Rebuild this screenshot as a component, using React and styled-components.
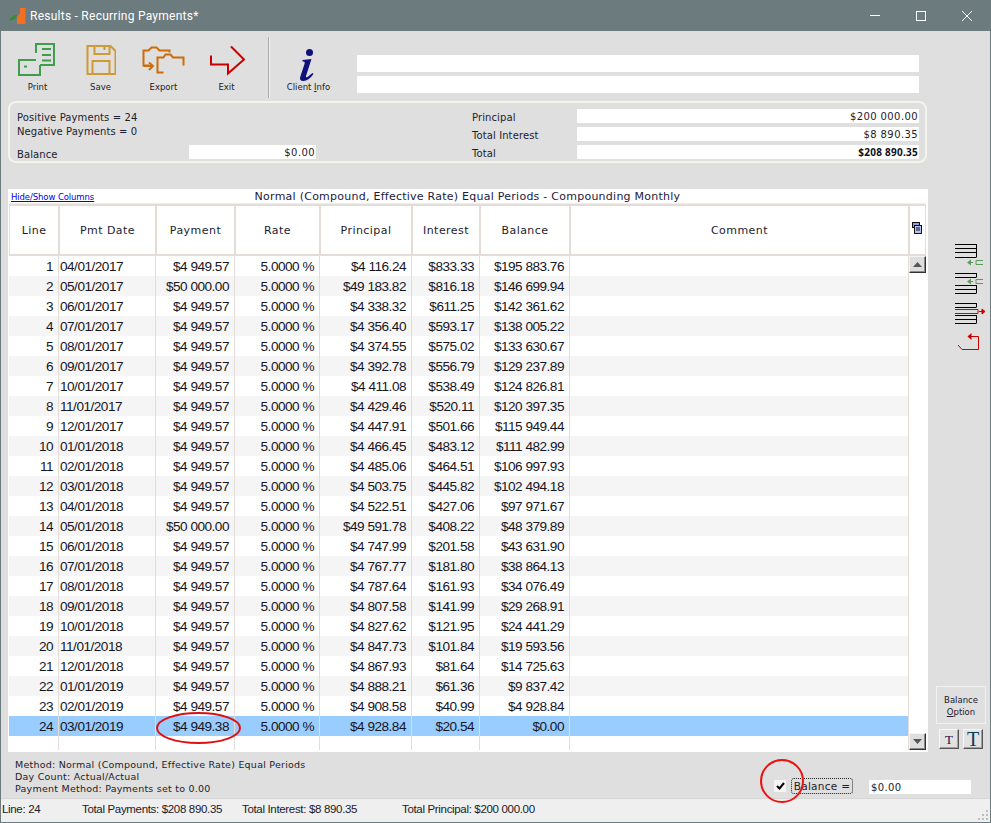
import React from "react";
import styled, { createGlobalStyle } from "styled-components";

const Global = createGlobalStyle`
  html, body { margin: 0; padding: 0; background: #dfdfdf; }
  * { box-sizing: border-box; }
`;

const UI = `"DejaVu Sans", Verdana, sans-serif`;
const CELL = `"Liberation Sans", Arial, sans-serif`;
const COLS = "50px 97px 79px 85px 92px 68px 90px 339px";

const rows = [
  ["04/01/2017", "$4 949.57", "$4 116.24", "$833.33", "$195 883.76"],
  ["05/01/2017", "$50 000.00", "$49 183.82", "$816.18", "$146 699.94"],
  ["06/01/2017", "$4 949.57", "$4 338.32", "$611.25", "$142 361.62"],
  ["07/01/2017", "$4 949.57", "$4 356.40", "$593.17", "$138 005.22"],
  ["08/01/2017", "$4 949.57", "$4 374.55", "$575.02", "$133 630.67"],
  ["09/01/2017", "$4 949.57", "$4 392.78", "$556.79", "$129 237.89"],
  ["10/01/2017", "$4 949.57", "$4 411.08", "$538.49", "$124 826.81"],
  ["11/01/2017", "$4 949.57", "$4 429.46", "$520.11", "$120 397.35"],
  ["12/01/2017", "$4 949.57", "$4 447.91", "$501.66", "$115 949.44"],
  ["01/01/2018", "$4 949.57", "$4 466.45", "$483.12", "$111 482.99"],
  ["02/01/2018", "$4 949.57", "$4 485.06", "$464.51", "$106 997.93"],
  ["03/01/2018", "$4 949.57", "$4 503.75", "$445.82", "$102 494.18"],
  ["04/01/2018", "$4 949.57", "$4 522.51", "$427.06", "$97 971.67"],
  ["05/01/2018", "$50 000.00", "$49 591.78", "$408.22", "$48 379.89"],
  ["06/01/2018", "$4 949.57", "$4 747.99", "$201.58", "$43 631.90"],
  ["07/01/2018", "$4 949.57", "$4 767.77", "$181.80", "$38 864.13"],
  ["08/01/2018", "$4 949.57", "$4 787.64", "$161.93", "$34 076.49"],
  ["09/01/2018", "$4 949.57", "$4 807.58", "$141.99", "$29 268.91"],
  ["10/01/2018", "$4 949.57", "$4 827.62", "$121.95", "$24 441.29"],
  ["11/01/2018", "$4 949.57", "$4 847.73", "$101.84", "$19 593.56"],
  ["12/01/2018", "$4 949.57", "$4 867.93", "$81.64", "$14 725.63"],
  ["01/01/2019", "$4 949.57", "$4 888.21", "$61.36", "$9 837.42"],
  ["02/01/2019", "$4 949.57", "$4 908.58", "$40.99", "$4 928.84"],
  ["03/01/2019", "$4 949.38", "$4 928.84", "$20.54", "$0.00"],
];

const Window = styled.div`
  width: 991px; height: 823px; display: flex; flex-direction: column;
  border: 1px solid #6b7b7e; border-top: 0; background: #dfdfdf; overflow: hidden; position: relative;
  font-family: ${UI}; color: #1c1c2c;
`;
const TitleBar = styled.header`
  height: 31px; flex: none; background: #6b7b7e; display: flex; align-items: center;
  padding-left: 8px; color: #fff; font: 12px Roboto, sans-serif; letter-spacing: 0.25px;
`;
const TitleText = styled.span` margin-left: 4px; flex: 1; `;
const WinButton = styled.button`
  width: 46px; height: 31px; border: 0; padding: 0; background: transparent;
  display: flex; align-items: center; justify-content: center;
`;
const Toolbar = styled.div`
  height: 70px; flex: none; display: flex; align-items: flex-start; padding-left: 4px;
`;
const ToolButton = styled.div`
  width: 63px; height: 63px; margin-top: 11px; display: flex; flex-direction: column; align-items: center;
  font-size: 8.5px; line-height: 12px; color: #222; text-indent: 2px;
`;
const ToolIcon = styled.div`
  height: 35px; display: flex; align-items: center; justify-content: center; margin-bottom: 4px;
`;
const ToolDivider = styled.div`
  width: 2px; height: 61px; margin: 6px 6px 0 11px; background: #a8a8a8; border-right: 1px solid #f2f2f2;
`;
const ClientFields = styled.div`
  margin: 24px 0 0 18px; width: 562px; display: flex; flex-direction: column; gap: 4px;
`;
const ClientField = styled.div` height: 17px; background: #fff; `;
const Field = styled.div`
  height: 14px; background: #fff; font-size: 10px; letter-spacing: 0.4px;
  line-height: 16px; padding: 0 1px 0 2px; text-align: right; color: #1c1c2c;
`;
const TotalField = styled(Field)`
  font: bold 10px/15px "Noto Sans", sans-serif; letter-spacing: 0.25px; color: #101018;
`;
const BalanceField = styled(Field)` width: 127px; `;
const Summary = styled.section`
  height: 62px; flex: none; margin: 0 63px 0 7px; border: 2px solid #f4f4ec; border-radius: 8px;
  padding: 6px 6px 0 7px; display: flex; justify-content: space-between;
`;
const SummaryLeft = styled.div` width: 299px; font-size: 10px; letter-spacing: 0.1px; `;
const SummaryLine = styled.div` height: 14px; line-height: 17px; `;
const BalanceLine = styled.div`
  display: flex; justify-content: space-between; align-items: flex-start; margin-top: 8px; height: 14px; line-height: 19px;
`;
const SummaryRight = styled.div`
  width: 447px; display: grid; grid-template-columns: 105px 342px; row-gap: 4px; grid-auto-rows: 14px;
  font-size: 10px; letter-spacing: 0.1px; line-height: 17px;
`;
const Main = styled.div`
  flex: none; height: 563px; margin-top: 26px; display: flex; padding-left: 7px;
`;
const Panel = styled.section`
  width: 920px; height: 563px; background: #fff; position: relative; display: flex; flex-direction: column;
`;
const Caption = styled.div`
  height: 15px; flex: none; display: flex; position: relative; justify-content: center; margin-right: 3px; padding-left: 2px;
  font-size: 11px; line-height: 16px; letter-spacing: 0.25px; border-bottom: 1px solid #f4ece6; color: #221a3c;
`;
const ColumnsLink = styled.a`
  position: absolute; left: 3px; top: 3px; font-size: 8.5px; line-height: 11px; letter-spacing: -0.1px;
  color: #0000ee; text-decoration: underline;
`;
const TableArea = styled.div` display: flex; flex: 1; padding-left: 1px; `;
const Table = styled.div` width: 900px; display: flex; flex-direction: column; `;
const HeadRow = styled.div`
  display: grid; grid-template-columns: ${COLS}; height: 52px; flex: none;
  border-top: 2px solid #e3dcd9; border-bottom: 2px solid #e3dcd9; border-left: 1px solid #e3dcd9;
`;
const HeadCell = styled.div`
  display: flex; align-items: center; justify-content: center; font-size: 11px; letter-spacing: 0.45px;
  border-right: 2px solid #e3dcd9; color: #1c1c30;
`;
const Row = styled.div`
  display: grid; grid-template-columns: ${COLS}; height: 20px; flex: none;
  background: ${(p) => (p.$selected ? "#99ccff" : p.$alt ? "#f5f5f5" : "#fff")};
`;
const Cell = styled.div`
  border-right: 1px solid #e3dcd9; font: 13.6px/21px ${CELL}; letter-spacing: -0.5px; color: #15151f;
  padding: 0 ${(p) => (p.$left ? 0 : 5)}px 0 ${(p) => (p.$left ? 1 : 0)}px; text-align: ${(p) => (p.$left ? "left" : "right")};
  white-space: nowrap; overflow: hidden;
`;
const Filler = styled(Row)` height: 14px; `;
const ScrollColumn = styled.div`
  width: 19px; display: flex; flex-direction: column; align-items: flex-start;
`;
const ScrollHead = styled.div`
  height: 52px; width: 17px; border-top: 2px solid #e3dcd9; border-bottom: 2px solid #e3dcd9;
  border-right: 1px solid #e3dcd9; display: flex; justify-content: center; padding: 16px 0 0 0;
`;
const ScrollTrack = styled.div`
  flex: 1; width: 17px; display: flex; flex-direction: column; justify-content: space-between; margin-bottom: 2px;
`;
const ScrollButton = styled.button`
  width: 17px; height: 17px; padding: 0; background: #dedede; display: flex; align-items: center; justify-content: center;
  border: 1px solid; border-color: #f4f4f4 #333 #333 #f4f4f4; box-shadow: inset -1px -1px 0 #8a8a8a;
`;
const Side = styled.aside`
  width: 61px; display: flex; flex-direction: column; align-items: flex-start; padding: 55px 0 3px;
`;
const SideIcons = styled.div` margin-left: 27px; display: flex; flex-direction: column; gap: 7px; flex: 1; `;
const BalanceOption = styled.div`
  width: 50px; height: 38px; margin-left: 8px; border: 1px solid #f2f2f2; display: flex; align-items: center; justify-content: center;
  text-align: center; font-size: 8.5px; line-height: 12px; color: #20202e; padding-top: 1px;
`;
const TButtons = styled.div` display: flex; gap: 4px; margin: 5px 0 0 11px; `;
const TButton = styled.button`
  width: 20px; height: 20px; padding: 0; background: #e2e2e2; border: 1px solid; border-color: #f6f6f6 #555 #555 #f6f6f6;
  box-shadow: inset -1px -1px 0 #a0a0a0;
  font: ${(p) => (p.$big ? "20px/18px" : "13px/17px")} "Liberation Serif", serif;
  color: ${(p) => (p.$big ? "#0b3d55" : "#2a0a4c")};
`;
const Footer = styled.div`
  height: 46px; flex: none; display: flex; justify-content: space-between; padding: 7px 19px 0 14px; position: relative; z-index: 1;
`;
const MethodInfo = styled.div` font-size: 9.5px; line-height: 12px; letter-spacing: 0.23px; `;
const BalanceCheck = styled.div`
  display: flex; align-items: flex-start; margin-top: 19px; height: 16px; position: relative; font-size: 10.5px; letter-spacing: 0.3px;
`;
const CheckBox = styled.span`
  width: 12px; height: 12px; margin-top: 2px; background: #f4f4f4; display: flex; align-items: center; justify-content: center;
`;
const FocusLabel = styled.span`
  margin-left: 5px; width: 62px; height: 16px; border: 1px dotted #222; border-radius: 3px; line-height: 14px; text-align: center; white-space: nowrap;
`;
const FooterValue = styled(Field)` width: 102px; margin: 2px 0 0 16px; text-align: left; `;
const StatusBar = styled.footer`
  flex: 1; background: #efefef; border-top: 1px solid #d6d6d6; display: flex; align-items: center; position: relative;
  font: 11.5px ${CELL}; letter-spacing: -0.33px; color: #1a1a28; padding: 0 0 3px 1px;
`;
const StatusItem = styled.span` width: ${(p) => p.$w}px; flex: none; `;
const Grip = styled.svg` position: absolute; right: 1px; bottom: 1px; `;
const RingMark = styled.svg` position: absolute; overflow: visible; pointer-events: none; `;
const PaymentRing = styled(RingMark)` left: 148px; top: 523px; `;
const CheckRing = styled(RingMark)` left: -14px; top: -19px; `;
const SideGlyph = styled.svg` display: block; `;

const PrintIcon = () => (
  <svg width="39" height="35" viewBox="17 42 39 35" fill="none" stroke="#3f9e4e" strokeWidth="2">
    <path d="M36 53V44H54V65H40M42 49H51M42 55H51M42 60.500H51" />
    <path d="M36 60H19V75H40V65" />
    <path d="M24 66.500h3" />
  </svg>
);
const SaveIcon = () => (
  <svg width="32" height="33" viewBox="83.500 44 32 33" fill="none" stroke="#cf9a35" strokeWidth="2">
    <path d="M87 47H110L115 52V75H87ZM94 47V55H109V47M104 47V51M92 75V62H109V75" />
  </svg>
);
const ExportIcon = () => (
  <svg width="44" height="30" viewBox="140.500 44.500 44 30" fill="none" stroke="#cc6d0a" strokeWidth="2">
    <path d="M149 65H143V50H148L151 47H156L159 50H169V52" />
    <path d="M163 72H157V57H163L165 54H170L172.500 57H183V65" />
    <path d="M143 65.500H152M148.500 62L152.500 65.500L148.500 69.500" />
  </svg>
);
const ExitIcon = () => (
  <svg width="37" height="30" viewBox="207 45.500 37 30" fill="none" stroke="#c80000" strokeWidth="2" overflow="visible">
    <path d="M211 56V65H228V74L244 60L231 47" />
  </svg>
);
const InfoIcon = () => (
  <svg width="18" height="35" viewBox="298.500 42 18 35" overflow="visible">
    <circle cx="309" cy="52.500" r="3.500" fill="#10107c" />
    <path d="M302 60L311 59L305.500 76Q305 78 307 77L312 73L313 74Q308 81 303 81Q298 81 300 76L304 64Q305 61 302 61.500Z" fill="#10107c" />
  </svg>
);
const LogoIcon = () => (
  <svg width="17" height="18" viewBox="0 0 17 18">
    <path d="M8 17V10L11 6V1H16.500V17Z" fill="#f36f21" />
    <path d="M0 13C2 10 5 8 8 8C7 12 4 14 0 13Z" fill="#2f8f2f" />
  </svg>
);
const Lines = ({ ys, x2 = 21 }) => (
  <g stroke="#000" fill="none">
    {ys.map((y) => <path key={y} d={`M0 ${y}.5H${x2}`} />)}
  </g>
);
const SideA = () => (
  <SideGlyph width="30" height="22">
    <Lines ys={[0, 4, 8, 13]} />
    <path d="M21.500 0V13.500" stroke="#000" />
    <path d="M15 18.500H18M28 16.500H21V20.500H28" stroke="#5d9b5d" fill="none" />
    <path d="M16 15.500V21.500L12 18.500Z" fill="#5d9b5d" />
  </SideGlyph>
);
const SideB = () => (
  <SideGlyph width="30" height="23">
    <Lines ys={[0, 4, 12, 16, 20]} />
    <path d="M21.500 0V4.500M21.500 12V20.500" stroke="#000" />
    <path d="M15 8.500H18M28 6.500H21V10.500H28" stroke="#5d9b5d" fill="none" />
    <path d="M16 5.500V11.500L12 8.500Z" fill="#5d9b5d" />
  </SideGlyph>
);
const SideC = () => (
  <SideGlyph width="31" height="23">
    <Lines ys={[0, 4, 12, 16, 20]} />
    <path d="M21.500 0V4.500M21.500 12V20.500" stroke="#000" />
    <path d="M0 6.500H23V10.500H0" stroke="#d00000" fill="none" />
    <path d="M24 8.500H30M27 6V11L30 8.500Z" stroke="#d00000" fill="#d00000" />
  </SideGlyph>
);
const SideD = () => (
  <SideGlyph width="24" height="18">
    <path d="M3 12L7 16.500H23.500V3.500H15" stroke="#c80000" fill="none" />
    <path d="M16.500 0V7L12.500 3.500Z" fill="#c80000" />
  </SideGlyph>
);
const Caret = ({ up }) => (
  <svg width="9" height="5" viewBox="0 0 9 5"><path d={up ? "M0 5L4.500 0L9 5Z" : "M0 0L4.500 5L9 0Z"} fill="#555" /></svg>
);

export default function App() {
  return (
    <Window>
      <Global />
      <TitleBar>
        <LogoIcon />
        <TitleText>Results - Recurring Payments*</TitleText>
        <WinButton>
          <svg width="10" height="1"><path d="M0 .5H10" stroke="#fff" /></svg>
        </WinButton>
        <WinButton>
          <svg width="10" height="10"><rect x=".5" y=".5" width="9" height="9" fill="none" stroke="#fff" /></svg>
        </WinButton>
        <WinButton>
          <svg width="10" height="10"><path d="M0 0L10 10M10 0L0 10" stroke="#fff" /></svg>
        </WinButton>
      </TitleBar>
      <Toolbar>
        <ToolButton><ToolIcon><PrintIcon /></ToolIcon>Print</ToolButton>
        <ToolButton><ToolIcon><SaveIcon /></ToolIcon>Save</ToolButton>
        <ToolButton><ToolIcon><ExportIcon /></ToolIcon>Export</ToolButton>
        <ToolButton><ToolIcon><ExitIcon /></ToolIcon>Exit</ToolButton>
        <ToolDivider />
        <ToolButton><ToolIcon><InfoIcon /></ToolIcon><span>Client <u>I</u>nfo</span></ToolButton>
        <ClientFields>
          <ClientField />
          <ClientField />
        </ClientFields>
      </Toolbar>
      <Summary>
        <SummaryLeft>
          <SummaryLine>Positive Payments = 24</SummaryLine>
          <SummaryLine>Negative Payments = 0</SummaryLine>
          <BalanceLine>
            <span>Balance</span>
            <BalanceField>$0.00</BalanceField>
          </BalanceLine>
        </SummaryLeft>
        <SummaryRight>
          <span>Principal</span><Field>$200 000.00</Field>
          <span>Total Interest</span><Field>$8 890.35</Field>
          <span>Total</span><TotalField>$208 890.35</TotalField>
        </SummaryRight>
      </Summary>
      <Main>
        <Panel>
          <Caption>
            <ColumnsLink>Hide/Show Columns</ColumnsLink>
            Normal (Compound, Effective Rate) Equal Periods - Compounding Monthly
          </Caption>
          <TableArea>
            <Table>
              <HeadRow>
                {["Line", "Pmt Date", "Payment", "Rate", "Principal", "Interest", "Balance", "Comment"].map((h) => (
                  <HeadCell key={h}>{h}</HeadCell>
                ))}
              </HeadRow>
              {rows.map((r, i) => (
                <Row key={i} $alt={i % 2 === 1} $selected={i === 23}>
                  <Cell>{i + 1}</Cell>
                  <Cell $left>{r[0]}</Cell>
                  <Cell>{r[1]}</Cell>
                  <Cell>5.0000 %</Cell>
                  <Cell>{r[2]}</Cell>
                  <Cell>{r[3]}</Cell>
                  <Cell>{r[4]}</Cell>
                  <Cell />
                </Row>
              ))}
              <Filler>
                {Array.from({ length: 8 }, (_, i) => <Cell key={i} />)}
              </Filler>
            </Table>
            <ScrollColumn>
              <ScrollHead>
                <svg width="10" height="12" viewBox="0 0 10 12">
                  <rect x=".5" y=".5" width="7" height="5" fill="#8f9be8" stroke="#111" />
                  <rect x="2.500" y="3.500" width="7" height="8" fill="#b8c2f4" stroke="#111" />
                  <path d="M4 6h4M4 8h4" stroke="#111" />
                </svg>
              </ScrollHead>
              <ScrollTrack>
                <ScrollButton><Caret up /></ScrollButton>
                <ScrollButton><Caret /></ScrollButton>
              </ScrollTrack>
            </ScrollColumn>
          </TableArea>
          <PaymentRing width="85" height="32">
            <ellipse cx="42.500" cy="16" rx="41.500" ry="15" fill="none" stroke="#e01010" strokeWidth="2" />
          </PaymentRing>
        </Panel>
        <Side>
          <SideIcons>
            <SideA />
            <SideB />
            <SideC />
            <SideD />
          </SideIcons>
          <BalanceOption><div>Balance<br /><u>O</u>ption</div></BalanceOption>
          <TButtons>
            <TButton>T</TButton>
            <TButton $big>T</TButton>
          </TButtons>
        </Side>
      </Main>
      <Footer>
        <MethodInfo>
          Method: Normal (Compound, Effective Rate) Equal Periods<br />
          Day Count: Actual/Actual<br />
          Payment Method: Payments set to 0.00
        </MethodInfo>
        <BalanceCheck>
          <CheckBox>
            <svg width="9" height="8" viewBox="0 0 9 8"><path d="M1 4L3.500 6.500L8 1" stroke="#000" strokeWidth="2" fill="none" /></svg>
          </CheckBox>
          <FocusLabel>Balance =</FocusLabel>
          <FooterValue>$0.00</FooterValue>
          <CheckRing width="44" height="44">
            <circle cx="22" cy="22" r="21" fill="none" stroke="#ee1111" strokeWidth="2" />
          </CheckRing>
        </BalanceCheck>
      </Footer>
      <StatusBar>
        <StatusItem $w={80}>Line: 24</StatusItem>
        <StatusItem $w={160}>Total Payments: $208 890.35</StatusItem>
        <StatusItem $w={160}>Total Interest: $8 890.35</StatusItem>
        <StatusItem $w={200}>Total Principal: $200 000.00</StatusItem>
        <Grip width="12" height="12" viewBox="0 0 12 12" fill="#bdbdbd">
          <path d="M9 1h2v2H9zM5 5h2v2H5zM9 5h2v2H9zM1 9h2v2H1zM5 9h2v2H5zM9 9h2v2H9z" />
        </Grip>
      </StatusBar>
    </Window>
  );
}
